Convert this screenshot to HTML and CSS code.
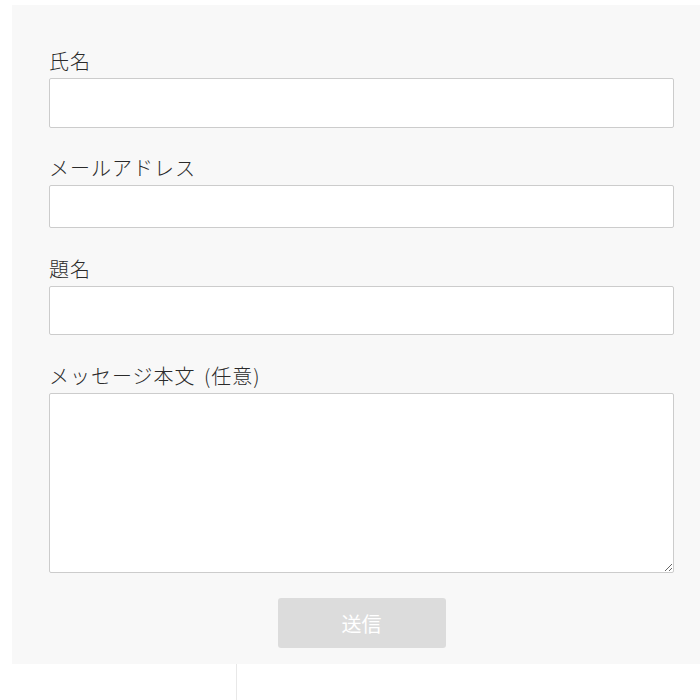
FILE: index.html
```html
<!DOCTYPE html>
<html lang="ja">
<head>
<meta charset="utf-8">
<link rel="stylesheet" href="styles.css">
</head>
<body>
<div class="panel">
  <form class="form">
    <div class="field first">
      <label class="label" for="name">氏名</label>
      <input class="input h50" id="name" type="text">
    </div>
    <div class="field">
      <label class="label" for="mail">メールアドレス</label>
      <input class="input h43" id="mail" type="email">
    </div>
    <div class="field">
      <label class="label" for="subject">題名</label>
      <input class="input h49" id="subject" type="text">
    </div>
    <div class="field last">
      <label class="label" for="msg">メッセージ本文 (任意)</label>
      <textarea class="textarea" id="msg"></textarea>
    </div>
    <div class="actions">
      <button class="submit" type="button">送信</button>
    </div>
  </form>
</div>
<div class="below"><div class="divider"></div></div>
</body>
</html>
```

FILE: styles.css
```css
html, body {
  margin: 0;
  padding: 0;
  background: #ffffff;
  overflow: hidden;
}
body {
  font-family: "Noto Sans CJK JP", "Noto Sans", sans-serif;
  color: #333333;
}
.panel {
  margin: 5px 0 0 12px;
  padding: 42px 26px 16px 37px;
  background: #f8f8f8;
}
.form {
  display: flex;
  flex-direction: column;
}
.field {
  display: flex;
  flex-direction: column;
  margin-bottom: 27px;
}
.field.first {
  margin-bottom: 26px;
}
.field.last {
  margin-bottom: 25px;
}
.label {
  font-size: 20px;
  font-weight: 300;
  letter-spacing: 1px;
  word-spacing: 3px;
  line-height: 28px;
  margin-bottom: 3px;
  color: #2a2a2a;
}
.input, .textarea {
  box-sizing: border-box;
  width: 100%;
  margin: 0;
  border: 1px solid #cccccc;
  border-radius: 2px;
  background: #ffffff;
  font-family: inherit;
  font-size: 16px;
}
.h50 { height: 50px; }
.h43 { height: 43px; }
.h49 { height: 49px; }
.textarea {
  height: 180px;
  resize: vertical;
  display: block;
}
.actions {
  display: flex;
  justify-content: center;
}
.submit {
  width: 168px;
  height: 50px;
  border: none;
  border-radius: 3px;
  background: #dcdcdc;
  color: #ffffff;
  font-family: inherit;
  font-size: 20px;
  font-weight: 400;
  padding: 0;
}
.below {
  height: 40px;
}
.divider {
  margin-left: 236px;
  width: 0;
  height: 100%;
  border-left: 1px solid #e8e8e8;
}
```
